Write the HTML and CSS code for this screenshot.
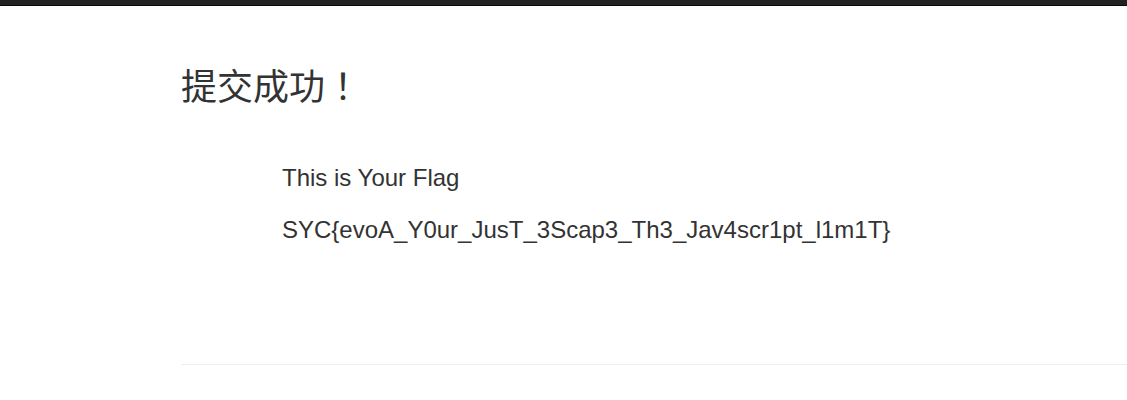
FILE: index.html
```html
<!DOCTYPE html>
<html>
<head>
    <meta charset="utf-8">
    <title>提交成功</title>
    <link rel="stylesheet" href="styles.css">
</head>
<body>
    <div class="topbar"></div>
    <div class="container">
        <h1>提交成功！</h1>
        <div class="flag">
            <p>This is Your Flag</p>
            <p>SYC{evoA_Y0ur_JusT_3Scap3_Th3_Jav4scr1pt_l1m1T}</p>
        </div>
        <hr>
    </div>
</body>
</html>
```

FILE: styles.css
```css
body {
    margin: 0;
    background: #ffffff;
    color: #333333;
    font-family: "Liberation Sans", Arial, "Noto Sans CJK SC", sans-serif;
    font-size: 14px;
    line-height: 1.42857;
}
.topbar {
    height: 5px;
    background: #222222;
    border-bottom: 1px solid #080808;
}
.container {
    padding-left: 181px;
    padding-top: 58px;
}
h1 {
    margin: 0;
    font-size: 36px;
    font-weight: 400;
    line-height: 40px;
    font-family: "Noto Sans CJK TC", "Noto Sans CJK SC", sans-serif;
}
.flag {
    padding-left: 101px;
    padding-top: 57px;
}
.flag p {
    margin: 0 0 19px;
    font-size: 24px;
    line-height: 33px;
}
hr {
    margin: 118px 0 0;
    border: 0;
    border-top: 1px solid #eeeeee;
}
```
